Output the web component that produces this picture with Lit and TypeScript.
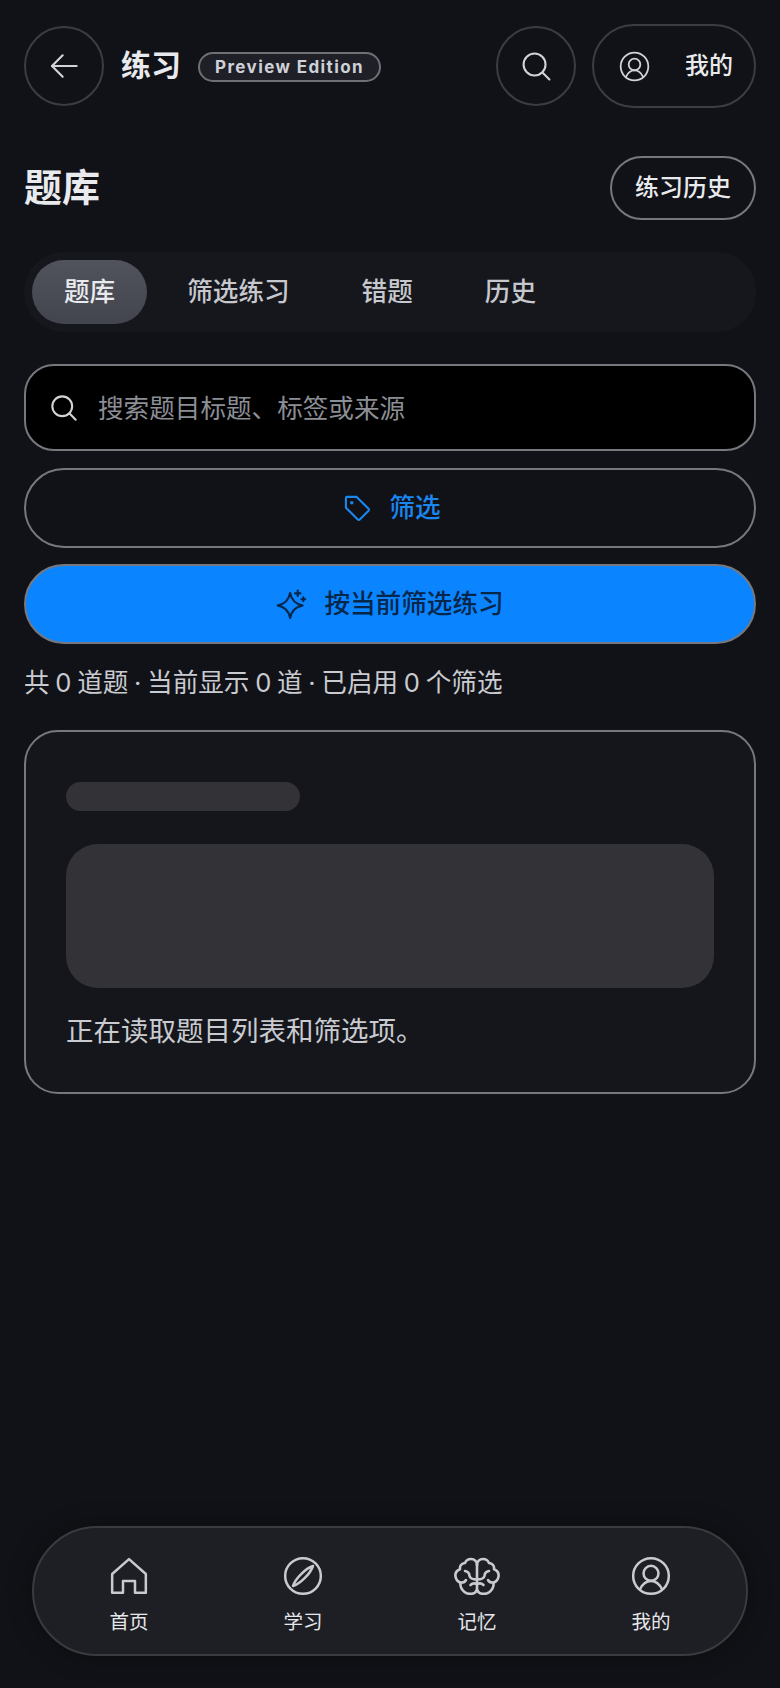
import { LitElement, html, css, svg } from 'lit';
import { customElement } from 'lit/decorators.js';

const icon = (body: unknown, size: number, sw = 2, box = '0 0 24 24', h = size) => html`<svg
  width=${size}
  height=${h}
  viewBox=${box}
  fill="none"
  stroke="currentColor"
  stroke-width=${sw}
  stroke-linecap="round"
  stroke-linejoin="round"
>${body}</svg>`;

const back = svg`<path d="M21.500 12H3"/><path d="M11 4 3 12l8 8"/>`;
const search = svg`<circle cx="10.500" cy="10.500" r="8.500"/><path d="m16.800 16.800 5.200 5.200"/>`;
const user = svg`<circle cx="12" cy="12" r="10.700"/><circle cx="12" cy="10.400" r="4.500"/><path d="M5.400 20c1.400-3 3.600-5 6.600-5s5.200 2 6.600 5"/>`;
const tag = svg`<path d="M2.500 3.500a1 1 0 0 1 1-1h8.200l10 10a1.500 1.500 0 0 1 0 2.100l-7.100 7.100a1.500 1.500 0 0 1-2.100 0l-10-10z"/><circle cx="7.500" cy="7.500" r=".6" fill="currentColor"/>`;
const spark = svg`<path d="M10.600 3.700c1 5.500 3.900 8.400 9.400 9.400-5.500 1-8.400 3.900-9.400 9.400-1-5.500-3.900-8.400-9.400-9.400 5.500-1 8.400-3.900 9.400-9.400z"/><path d="M16.300 2v4M14.300 4h4M20.500 7v2.800M19.100 8.400h2.800"/>`;
const home = svg`<path d="M1.900 22V10.800L12 1.900l10.100 8.900V22h-6.500v-7H8.400v7z"/>`;
const compass = svg`<circle cx="12" cy="12" r="10.700"/><path d="M18 6C13.500 7.500 7.500 13.500 6 18 10.500 16.500 16.500 10.500 18 6z"/>`;
const brainHalf = svg`<path d="M23 8c0-3.500-2.500-6-6-6-2.800 0-5 1.500-6 4-3.500.4-5.500 3-5 6.200C2.500 13.500 1 16.500 1.500 19.500c.5 3 2.800 5.500 5 6-.5 3.500 1 7 4 9.500 4 3 10.500 2.500 12.500-2"/><path d="M15.500 19c-.1-2.500-1.700-4.500-4.500-5M15.500 19c.5 2 2.500 3.500 7.500 3.500M7 25.500c2.200.2 4-.8 5-2.500M23 27c-1.800-.8-4.500-1-6.500 1"/>`;
const brain = svg`<path d="M23 8v25"/>${brainHalf}<g transform="translate(46 0) scale(-1 1)">${brainHalf}</g>`;

const tabs = ['题库', '筛选练习', '错题', '历史'];
const navItems = [
  { label: '首页', icon: icon(home, 40, 1.5) },
  { label: '学习', icon: icon(compass, 40, 1.5) },
  { label: '记忆', icon: icon(brain, 46, 2.6, '0 0 46 38', 38) },
  { label: '我的', icon: icon(user, 40, 1.5) },
];

@customElement('app-root')
export class AppRoot extends LitElement {
  static styles = css`
    :host {
      display: block;
      position: relative;
      height: 1688px;
      overflow: hidden;
      background: #111217;
      color: #e6e7ea;
      font-family: 'Inter', 'Noto Sans CJK SC', sans-serif;
    }

    .page {
      padding: 24px 24px 0;
      display: flex;
      flex-direction: column;
    }

    /* CJK glyphs sit low in the line box, so lift them a little */
    .t {
      padding-bottom: 6px;
    }

    .header {
      display: flex;
      align-items: center;
      height: 84px;
    }

    .round {
      width: 80px;
      height: 80px;
      box-sizing: border-box;
      border: 2px solid #3c3d42;
      border-radius: 50%;
      display: flex;
      align-items: center;
      justify-content: center;
      color: #d2d3d6;
      flex: none;
    }

    .title {
      margin-left: 17px;
      font-size: 30px;
      font-weight: 700;
      color: #e9eaed;
    }

    .badge {
      margin: 2px 0 0 17px;
      height: 30px;
      box-sizing: border-box;
      padding: 0 15px;
      border: 2px solid #6f7076;
      border-radius: 15px;
      background: #1f2027;
      display: flex;
      align-items: center;
      font-size: 17px;
      font-weight: 700;
      letter-spacing: 1.4px;
      color: #cfd1d8;
    }

    .spacer {
      flex: 1;
    }

    .me {
      margin-left: 16px;
      width: 164px;
      height: 84px;
      box-sizing: border-box;
      border: 2px solid #3c3d42;
      border-radius: 42px;
      display: flex;
      align-items: center;
      padding: 0 21px 0 25px;
      color: #d2d3d6;
    }

    .me span {
      margin-left: auto;
      font-size: 24px;
      font-weight: 500;
      color: #e9eaed;
    }

    .heading {
      margin-top: 48px;
      display: flex;
      align-items: center;
      justify-content: space-between;
      height: 64px;
    }

    .heading h1 {
      margin: 0;
      padding-bottom: 8px;
      font-size: 38px;
      font-weight: 700;
      color: #e9eaed;
    }

    .history {
      width: 146px;
      height: 64px;
      box-sizing: border-box;
      border: 2px solid #77787d;
      border-radius: 32px;
      display: flex;
      align-items: center;
      justify-content: center;
      font-size: 24px;
      font-weight: 500;
      color: #e9eaed;
    }

    .tabs {
      margin-top: 32px;
      height: 80px;
      box-sizing: border-box;
      padding: 8px;
      border-radius: 40px;
      background: #16171c;
      display: flex;
      align-items: center;
      gap: 8px;
    }

    .tab {
      height: 64px;
      padding: 0 32px;
      display: flex;
      align-items: center;
      font-size: 25.6px;
      font-weight: 500;
      color: #c6c8cd;
      border-radius: 32px;
    }

    .tab.active {
      background: linear-gradient(180deg, #51535c, #42444e);
      color: #e9eaed;
    }

    .field {
      margin-top: 32px;
      height: 87px;
      box-sizing: border-box;
      border: 2px solid #77787d;
      border-radius: 30px;
      background: #000;
      display: flex;
      align-items: center;
      padding: 0 24px;
      gap: 20px;
      color: #d2d3d6;
      font-size: 25.6px;
    }

    .field .t {
      padding-bottom: 2px;
      color: #8c8e95;
    }

    .filter,
    .primary {
      height: 80px;
      box-sizing: border-box;
      border-radius: 40px;
      border: 2px solid #77787d;
      display: flex;
      align-items: center;
      justify-content: center;
      font-size: 25.6px;
      font-weight: 500;
      gap: 16px;
    }

    .filter {
      margin-top: 17px;
      padding-left: 4px;
      gap: 18px;
      color: #1a86f0;
    }

    .primary {
      margin-top: 16px;
      background: #0a84ff;
      color: #06264a;
    }

    .stats {
      margin-top: 21px;
      font-size: 25.6px;
      line-height: 36px;
      word-spacing: -1.5px;
      color: #c9cbd0;
    }

    .card {
      margin-top: 29px;
      height: 364px;
      box-sizing: border-box;
      border: 2px solid #77787d;
      border-radius: 34px;
      background: #15161b;
      padding: 50px 40px 0;
    }

    .skeleton-line {
      width: 234px;
      height: 29px;
      border-radius: 15px;
      background: #323237;
    }

    .skeleton-block {
      margin-top: 33px;
      height: 144px;
      border-radius: 32px;
      background: #323237;
    }

    .card p {
      margin: 23px 0 0;
      font-size: 27.5px;
      line-height: 40px;
      color: #c9cbd0;
    }

    .nav {
      position: absolute;
      left: 32px;
      right: 32px;
      top: 1526px;
      height: 130px;
      box-sizing: border-box;
      border: 2px solid #3a3b40;
      border-radius: 65px;
      background: #1e1f25;
      display: grid;
      grid-template-columns: repeat(4, 1fr);
      padding: 0 8px;
      box-shadow: 0 0 24px rgba(0, 0, 0, 0.35);
    }

    .nav-item {
      display: flex;
      flex-direction: column;
      align-items: center;
      padding-top: 28px;
      color: #c9cad0;
    }

    .nav-icon {
      height: 40px;
      display: flex;
      align-items: center;
    }

    .nav-item span {
      margin-top: 11px;
      font-size: 19.5px;
      line-height: 30px;
      font-weight: 400;
      color: #e6e7ea;
    }
  `;

  render() {
    return html`
      <div class="page">
        <div class="header">
          <div class="round">${icon(back, 32, 1.6)}</div>
          <div class="title t">练习</div>
          <div class="badge">Preview Edition</div>
          <div class="spacer"></div>
          <div class="round">${icon(search, 31, 1.6)}</div>
          <div class="me">${icon(user, 31, 1.4)}<span class="t">我的</span></div>
        </div>
        <div class="heading">
          <h1>题库</h1>
          <div class="history"><span class="t">练习历史</span></div>
        </div>
        <div class="tabs">
          ${tabs.map((t, i) => html`<div class="tab ${i === 0 ? 'active' : ''}"><span class="t">${t}</span></div>`)}
        </div>
        <div class="field">${icon(search, 28, 1.8)}<span class="t">搜索题目标题、标签或来源</span></div>
        <div class="filter">${icon(tag, 28, 1.8)}<span class="t">筛选</span></div>
        <div class="primary">${icon(spark, 32, 1.6)}<span class="t">按当前筛选练习</span></div>
        <div class="stats">共 0 道题 · 当前显示 0 道 · 已启用 0 个筛选</div>
        <div class="card">
          <div class="skeleton-line"></div>
          <div class="skeleton-block"></div>
          <p>正在读取题目列表和筛选项。</p>
        </div>
      </div>
      <div class="nav">
        ${navItems.map(
          (n) => html`<div class="nav-item">
            <div class="nav-icon">${n.icon}</div>
            <span>${n.label}</span>
          </div>`,
        )}
      </div>
    `;
  }
}
